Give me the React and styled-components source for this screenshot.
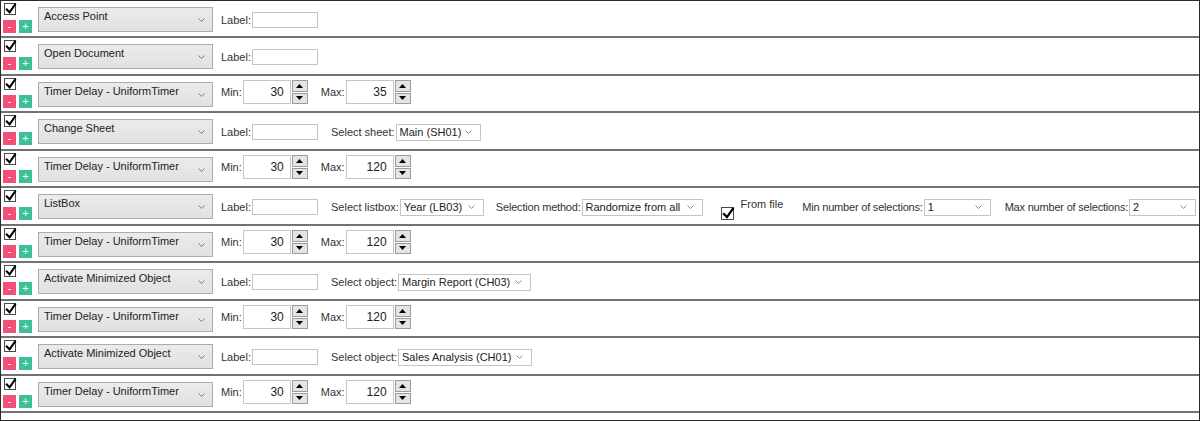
import React from "react";
import styled, { createGlobalStyle } from "styled-components";

const Global = createGlobalStyle`
  html, body { margin: 0; padding: 0; background: #fff; }
  body { font-family: "Liberation Sans", Arial, sans-serif; font-size: 11px; color: #333; }
  * { box-sizing: border-box; }
`;

const Frame = styled.div`
  width: 1200px;
  height: 421px;
  border: 1px solid #2b2b2b;
  background: #fff;
  display: flex;
  flex-direction: column;
  overflow: hidden;
`;

const Row = styled.div`
  display: flex;
  align-items: flex-start;
  padding-left: 2px;
  height: 37px;
  flex: none;
  border-bottom: 2px solid #727272;
  white-space: nowrap;
  &:nth-child(even) { height: 38px; }
  & > * { flex-shrink: 0; }
`;

const LeftCol = styled.div`
  width: 30px;
  margin-top: 2px;
  display: flex;
  flex-direction: column;
  gap: 5px;
`;

const Check = styled.span`
  position: relative;
  display: block;
  width: ${(p) => p.$size || 12}px;
  height: ${(p) => p.$size || 12}px;
  margin-left: 1px;
  border: 1px solid #4a4a4a;
  background: #fff;
  flex-shrink: 0;
  & svg { position: absolute; left: 0px; top: -1px; }
`;

const BtnRow = styled.div`
  display: flex;
  gap: 3px;
`;

const SqBtn = styled.span`
  width: 13px;
  height: 13px;
  background: ${(p) => (p.$kind === "minus" ? "#f24f79" : "#3dbf9a")};
  color: #fff;
  font-size: 11px;
  line-height: 13px;
  text-align: center;
`;

const Combo = styled.div`
  width: 175px;
  height: 25px;
  margin-top: 6px;
  margin-left: 5px;
  border: 1px solid #acacac;
  background: linear-gradient(#ebebeb, #e1e1e1);
  display: flex;
  justify-content: space-between;
  align-items: flex-start;
  padding: 2px 7px 0 5px;
  line-height: 13px;
  color: #222;
  & svg { margin-top: 8px; }
`;

const Group = styled.div`
  display: flex;
  align-items: center;
  height: 16px;
  margin-top: 11px;
  margin-left: ${(p) => p.$ml ?? 13}px;
  white-space: nowrap;
`;

const Label = styled.span`
  margin-right: 1px;
  line-height: 13px;
  letter-spacing: ${(p) => (p.$tight ? "-0.2px" : "0")};
`;

const TextInput = styled.span`
  display: block;
  width: 66px;
  height: 16px;
  border: 1px solid #c3c3c3;
  background: #fff;
`;

const Select = styled.div`
  width: ${(p) => p.$w}px;
  height: 17px;
  border: 1px solid #c4c4c4;
  background: #fff;
  display: flex;
  align-items: center;
  justify-content: space-between;
  padding: 0 8px 0 3px;
  line-height: 13px;
  color: #222;
`;

const NumGroup = styled.div`
  display: flex;
  align-items: center;
  margin-top: 4px;
  margin-left: ${(p) => p.$ml ?? 14}px;
`;

const NumBox = styled.div`
  width: 48px;
  height: 24px;
  border: 1px solid #c6c6c6;
  background: #fff;
  text-align: right;
  padding-right: 6px;
  line-height: 22px;
  font-size: 12px;
  color: #222;
`;

const Spinner = styled.div`
  width: 16px;
  height: 24px;
  margin-left: 1px;
  display: flex;
  flex-direction: column;
  gap: 1px;
`;

const SpinBtn = styled.div`
  flex: 1;
  border: 1px solid #9c9c9c;
  background: #e4e4e4;
  display: flex;
  align-items: center;
  justify-content: center;
`;

const FileGroup = styled.div`
  display: flex;
  align-items: flex-start;
  margin-top: 11px;
  margin-left: 17px;
  gap: 7px;
  & > span:first-child { margin-top: 8px; }
`;

const FileText = styled.span`
  line-height: 13px;
  margin-top: -1px;
`;

const Chevron = ({ color = "#7a7a7a" }) => (
  <svg width="7" height="4" viewBox="0 0 7 4">
    <path d="M0.5 0.5 L3.5 3.5 L6.5 0.5" fill="none" stroke={color} strokeWidth="1" />
  </svg>
);

const CheckMark = ({ size = 12 }) => (
  <svg width={size} height={size} viewBox="0 0 12 12">
    <path d="M1.8 6.5 L4.6 9.3 L10 1.6" fill="none" stroke="#000" strokeWidth="2.1" strokeLinecap="square" />
  </svg>
);

const Tri = ({ up }) => (
  <svg width="7" height="4" viewBox="0 0 7 4">
    <path d={up ? "M0 4 L3.5 0 L7 4 Z" : "M0 0 L3.5 4 L7 0 Z"} fill="#000" />
  </svg>
);

const CheckBox = ({ size }) => (
  <Check $size={size}>
    <CheckMark size={size} />
  </Check>
);

const Num = ({ label, value, ml }) => (
  <NumGroup $ml={ml}>
    <Label>{label}</Label>
    <NumBox>{value}</NumBox>
    <Spinner>
      <SpinBtn><Tri up /></SpinBtn>
      <SpinBtn><Tri /></SpinBtn>
    </Spinner>
  </NumGroup>
);

const LabelField = () => (
  <Group $ml={8}>
    <Label>Label:</Label>
    <TextInput />
  </Group>
);

const SelField = ({ label, value, w, ml, tight }) => (
  <Group $ml={ml}>
    <Label $tight={tight}>{label}</Label>
    <Select $w={w}>
      <span>{value}</span>
      <Chevron color="#8a8a8a" />
    </Select>
  </Group>
);

const rows = [
  { name: "Access Point", kind: "label" },
  { name: "Open Document", kind: "label" },
  { name: "Timer Delay - UniformTimer", kind: "timer", min: 30, max: 35 },
  { name: "Change Sheet", kind: "label", selects: [{ label: "Select sheet:", value: "Main (SH01)", w: 85 }] },
  { name: "Timer Delay - UniformTimer", kind: "timer", min: 30, max: 120 },
  { name: "ListBox", kind: "listbox" },
  { name: "Timer Delay - UniformTimer", kind: "timer", min: 30, max: 120 },
  { name: "Activate Minimized Object", kind: "label", selects: [{ label: "Select object:", value: "Margin Report (CH03)", w: 133 }] },
  { name: "Timer Delay - UniformTimer", kind: "timer", min: 30, max: 120 },
  { name: "Activate Minimized Object", kind: "label", selects: [{ label: "Select object:", value: "Sales Analysis (CH01)", w: 134 }] },
  { name: "Timer Delay - UniformTimer", kind: "timer", min: 30, max: 120 },
];

export default function App() {
  return (
    <>
      <Global />
      <Frame>
        {rows.map((r, i) => (
          <Row key={i}>
            <LeftCol>
              <CheckBox size={12} />
              <BtnRow>
                <SqBtn $kind="minus">-</SqBtn>
                <SqBtn $kind="plus">+</SqBtn>
              </BtnRow>
            </LeftCol>
            <Combo>
              <span>{r.name}</span>
              <Chevron />
            </Combo>
            {r.kind === "timer" && (
              <>
                <Num label="Min:" value={r.min} ml={8} />
                <Num label="Max:" value={r.max} ml={13} />
              </>
            )}
            {r.kind === "label" && (
              <>
                <LabelField />
                {(r.selects || []).map((s, j) => (
                  <SelField key={j} {...s} />
                ))}
              </>
            )}
            {r.kind === "listbox" && (
              <>
                <LabelField />
                <SelField label="Select listbox:" value="Year (LB03)" w={84} />
                <SelField label="Selection method:" value="Randomize from all" w={121} ml={12} tight />
                <FileGroup>
                  <CheckBox size={13} />
                  <FileText>From file</FileText>
                </FileGroup>
                <SelField label="Min number of selections:" value="1" w={67} ml={19} tight />
                <SelField label="Max number of selections:" value="2" w={67} ml={14} tight />
              </>
            )}
          </Row>
        ))}
      </Frame>
    </>
  );
}
